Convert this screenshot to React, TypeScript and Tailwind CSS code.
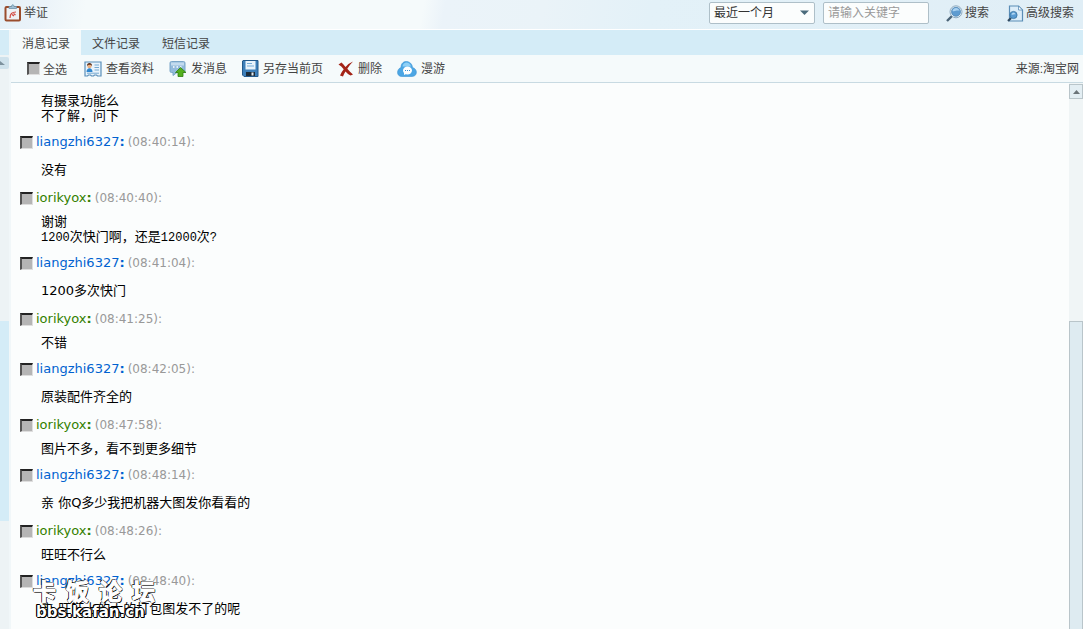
import React from "react";

type Author = "liangzhi6327" | "iorikyox";
type Message = { author: Author; time: string; lines: string[] };

const messages: Message[] = [
  { author: "liangzhi6327", time: "08:40:14", lines: ["没有"] },
  { author: "iorikyox", time: "08:40:40", lines: ["谢谢", "1200次快门啊，还是12000次?"] },
  { author: "liangzhi6327", time: "08:41:04", lines: ["1200多次快门"] },
  { author: "iorikyox", time: "08:41:25", lines: ["不错"] },
  { author: "liangzhi6327", time: "08:42:05", lines: ["原装配件齐全的"] },
  { author: "iorikyox", time: "08:47:58", lines: ["图片不多，看不到更多细节"] },
  { author: "liangzhi6327", time: "08:48:14", lines: ["亲 你Q多少我把机器大图发你看看的"] },
  { author: "iorikyox", time: "08:48:26", lines: ["旺旺不行么"] },
  { author: "liangzhi6327", time: "08:48:40", lines: ["亲 旺旺上的大的打包图发不了的呢"] },
];

const tickBox =
  "size-[13px] shrink-0 appearance-none border-t-2 border-l-2 border-r border-b border-t-[#222] border-l-[#555] border-r-[#dedede] border-b-[#dedede] bg-[#b5b5b5] checked:bg-[#555]";

function ClipboardIcon() {
  return (
    <svg width="18" height="18" viewBox="0 0 18 18" aria-hidden="true">
      <rect x="1.500" y="3" width="14.500" height="13.500" rx="1" fill="#eef1f4" stroke="#9a4d2c" strokeWidth="2" />
      <path d="M5 4.500V2.500h2.500C7.500.2 10 .2 10 2.500h2.500v2z" fill="#9fc0d6" stroke="#6f93aa" strokeWidth=".8" />
      <path d="M6 14c0-4 2-6 6-6M8 10.500l2 1.500M9.500 9.500l2 1.500" fill="none" stroke="#d2443c" strokeWidth="1.200" />
    </svg>
  );
}

function ProfileIcon() {
  return (
    <svg width="18" height="16" viewBox="0 0 18 16" aria-hidden="true">
      <path d="M1 1h16v14h-3.500l-1-1h-2l-1 1h-2l-1-1h-2l-1 1H1z" fill="#e9f4fc" stroke="#5a8fba" strokeWidth="1.200" />
      <circle cx="5.500" cy="5" r="2.200" fill="#e9b083" />
      <path d="M3 5c-.5-4 5.500-4 5 0-1-1.500-3.500-2-5 0z" fill="#5b2d17" />
      <path d="M2.500 11c0-5 6-5 6 0z" fill="#2e86cf" />
      <path d="M10.500 4h4.500M10.500 6.500h4.500M10.500 9h4.500M3 12.200h12" stroke="#76a9d0" />
    </svg>
  );
}

function SendIcon() {
  return (
    <svg width="18" height="17" viewBox="0 0 18 17" aria-hidden="true">
      <path d="M2.500 1.500h12q1.500 0 1.500 1.500v8q0 1.500-1.500 1.500H8L4 15.500v-3H2.500Q1 12.500 1 11V3q0-1.500 1.500-1.500z" fill="#93bbdc" stroke="#7aa6c8" />
      <path d="M2 2.500h13v3H2z" fill="#c3dbee" />
      <path d="M4 7h1.500M7.500 7H9M11 7h1.500" stroke="#fff" strokeWidth="1.500" />
      <path d="M11.500 7.500l5.500 5h-3v4H9v-4H6.500z" fill="#54b01e" stroke="#2f7d12" strokeWidth=".8" />
    </svg>
  );
}

function SaveIcon() {
  return (
    <svg width="17" height="17" viewBox="0 0 17 17" aria-hidden="true">
      <path d="M1 .5h15v16H2L.5 15V1z" fill="#3d7fb9" stroke="#245a8c" />
      <rect x="3.500" y="1" width="10" height="8.500" fill="#e9f3fb" />
      <path d="M5 3.500h5M5 6h7" stroke="#79add7" />
      <rect x="4" y="12" width="9" height="4" fill="#1c2b38" />
      <rect x="9.500" y="12.500" width="2" height="3" fill="#e5edf3" />
    </svg>
  );
}

function DeleteIcon() {
  return (
    <svg width="16" height="16" viewBox="0 0 16 16" aria-hidden="true">
      <path d="M.5 3.500L3.500 1.500Q5 2.500 7.500 6 11 2 15 .5 12 3.500 9.300 7.800 12 11 15 13.500L12.500 14.500Q9.500 13 7.500 10.500 5.500 13.500 5 15.500L2 14.500Q3 11.500 5.700 8.200 3.500 5 .5 3.500z" fill="#a32317" />
    </svg>
  );
}

function CloudIcon() {
  return (
    <svg width="20" height="17" viewBox="0 0 20 17" aria-hidden="true">
      <path d="M5 16.500C-1 16.500-.5 9 4 7.500 4-1 15 .0 15.500 7.500 21 9 20.500 16.500 15 16.500z" fill="#4ca6e4" stroke="#3c93d4" strokeWidth=".6" />
      <path d="M5.500 6.500C6 1 13 1 14 6.500z" fill="#8fd0f6" />
      <ellipse cx="10.500" cy="10.500" rx="4.500" ry="4" fill="#fff" />
      <path d="M7 12v3l3-1.500z" fill="#fff" />
      <path d="M8 10.500h1M10 10.500h1M12 10.500h1" stroke="#3c93d4" strokeWidth="1.200" />
    </svg>
  );
}

function SearchIcon() {
  return (
    <svg width="17" height="17" viewBox="0 0 17 17" aria-hidden="true">
      <path d="M1 16l5-5" stroke="#4c6477" strokeWidth="2.400" />
      <circle cx="10" cy="6.800" r="6" fill="#e3eef6" stroke="#8fabc0" />
      <circle cx="10" cy="6.800" r="4.500" fill="#5d9bd0" stroke="#4a82b0" strokeWidth=".7" />
      <path d="M6.500 6C7 2 13 2 13.500 6 11 4.500 9 7 6.500 6z" fill="#a9d1f0" />
    </svg>
  );
}

function AdvancedSearchIcon() {
  return (
    <svg width="17" height="17" viewBox="0 0 17 17" aria-hidden="true">
      <path d="M2.500 1h9l4 4v11h-13z" fill="#dcedf9" stroke="#5a8db6" strokeWidth="1.200" />
      <path d="M11.500 1v4h4z" fill="#fff" stroke="#5a8db6" strokeWidth=".8" />
      <path d="M1 16l3-3" stroke="#324a60" strokeWidth="2.200" />
      <circle cx="6.500" cy="10" r="3.600" fill="#5a9bd2" stroke="#35719f" strokeWidth=".8" />
      <path d="M4.500 9.500c.5-2.500 3.500-2.500 4 0-1.500-.8-2.500.8-4 0z" fill="#b4d8f3" />
    </svg>
  );
}

function ToolButton({ icon, label }: { icon: React.ReactNode; label: string }) {
  return (
    <button type="button" className="flex items-center gap-1 text-[#444]">
      {icon}
      <span>{label}</span>
    </button>
  );
}

function Line({ text, narrow }: { text: string; narrow: boolean }) {
  return (
    <p>
      {text.split(/([0-9?]+)/).map((part, i) =>
        narrow && /^[0-9?]+$/.test(part) ? (
          <span key={i} className="font-['Liberation_Mono',monospace] text-[12px] leading-none">{part}</span>
        ) : (
          part
        ),
      )}
    </p>
  );
}

function MessageItem({ message }: { message: Message }) {
  const own = message.author === "iorikyox";
  return (
    <li>
      <label className="flex h-[18px] items-center gap-[3px] whitespace-nowrap">
        <input type="checkbox" className={tickBox} />
        <span className={own ? "text-[#338000]" : "text-[#0062d0]"}>
          {message.author}
          <b>:</b>
        </span>
        <time className="text-[12px] text-[#999]">({message.time}):</time>
      </label>
      <div className={own ? "pt-[7px] pb-[10px] pl-[21px] leading-[15px]" : "py-[9px] pl-[21px] leading-5"}>
        {message.lines.map((line) => (
          <Line key={line} text={line} narrow={own} />
        ))}
      </div>
    </li>
  );
}

export default function App() {
  return (
    <div className="flex h-screen flex-col overflow-hidden bg-[#fbfdfd] font-['Liberation_Sans','Noto_Sans_CJK_SC',sans-serif] text-[12px] leading-4 text-[#444]">
      <header className="flex h-[30px] shrink-0 items-center border-b border-white bg-[linear-gradient(100deg,#e4f0f7_0%,#ebf3f9_4%,#f5fafb_8%,#f5fafb_39%,#ebf3f9_41%,#eaf3f8_50%,#e3f1f8_60%,#e0eef6_100%)] pr-[9px] pb-[3px] pl-1">
        <h1 className="flex flex-1 items-center gap-[2px]">
          <ClipboardIcon />
          举证
        </h1>
        <div className="relative mr-2 w-[106px]">
          <select aria-label="时间范围" className="block h-[22px] w-full appearance-none rounded-xs border border-[#aebfc8] bg-[#fbfdfd] pl-1 text-[#333]">
            <option>最近一个月</option>
          </select>
          <svg className="pointer-events-none absolute top-2 right-1.5" width="9" height="6" viewBox="0 0 9 6" aria-hidden="true">
            <path d="M0 .5h9L4.500 5z" fill="#4a6b7c" />
          </svg>
        </div>
        <input aria-label="关键字" placeholder="请输入关键字" className="h-[22px] w-[106px] rounded-xs border border-[#aebfc8] bg-[#fbfdfd] px-1 placeholder:text-[#999]" />
        <div className="ml-[17px] flex gap-[18px]">
          <button type="button" className="flex items-center gap-[2px]"><SearchIcon />搜索</button>
          <button type="button" className="flex items-center gap-[2px]"><AdvancedSearchIcon />高级搜索</button>
        </div>
      </header>

      <div className="flex min-h-0 flex-1">
        <aside className="flex w-[11px] shrink-0 flex-col border-r-2 border-[#f1f7f9] bg-[#edf3f5]">
          <div className="h-[25px] shrink-0 bg-[#d4ecf7]" />
          <button type="button" aria-label="收起" className="mt-[2px] flex h-3 shrink-0 items-center rounded-r-xs bg-[#cfe2ec]">
            <svg width="5" height="4" viewBox="0 0 5 4" aria-hidden="true"><path d="M0 0l5 4H0z" fill="#7d929e" /></svg>
          </button>
          <div className="mt-[252px] h-[200px] shrink-0 bg-[#d4ecf7]" />
        </aside>

        <main className="flex min-w-0 flex-1 flex-col">
          <nav className="flex h-[25px] shrink-0 bg-[#d4ecf7]">
            <a href="#messages" className="bg-[#f5fafb] px-[11px] pt-[6px]">消息记录</a>
            <a href="#files" className="px-[11px] pt-[6px]">文件记录</a>
            <a href="#sms" className="px-[11px] pt-[6px]">短信记录</a>
          </nav>
          <div className="flex h-7 shrink-0 items-center border-b border-[#c8dae2] bg-[#f5fafb] pr-1 pl-4">
            <label className="flex items-center gap-[3px]">
              <input type="checkbox" className={tickBox} />
              <span className="pt-[2px]">全选</span>
            </label>
            <div className="ml-[17px] flex flex-1 gap-[15px]">
              <ToolButton icon={<ProfileIcon />} label="查看资料" />
              <ToolButton icon={<SendIcon />} label="发消息" />
              <ToolButton icon={<SaveIcon />} label="另存当前页" />
              <ToolButton icon={<DeleteIcon />} label="删除" />
              <ToolButton icon={<CloudIcon />} label="漫游" />
            </div>
            <span>来源:淘宝网</span>
          </div>

          <div className="flex min-h-0 flex-1">
            <section id="messages" className="relative min-w-0 flex-1 overflow-hidden pt-[3px] pl-[9px] font-['DejaVu_Sans','Noto_Sans_CJK_SC',sans-serif] text-[13px] text-black">
              <div className="pt-[7px] pb-[10px] pl-[21px] leading-[15px]">
                <p>有摄录功能么</p>
                <p>不了解，问下</p>
              </div>
              <ul>
                {messages.map((m) => (
                  <MessageItem key={m.time} message={m} />
                ))}
              </ul>
              <div className="absolute bottom-[9px] left-[22px] font-bold text-white [text-shadow:1px_0_0_#000,-1px_0_0_#000,0_1px_0_#000,0_-1px_0_#000,1px_1px_0_#000,-1px_-1px_0_#000]">
                <p className="flex gap-[10px] text-[23px] leading-6 [-webkit-text-stroke:1px_#fff]">
                  <span>卡</span><span>饭</span><span>论</span><span>坛</span>
                </p>
                <p className="pl-[3px] text-[15px] leading-4">bbs.kafan.cn</p>
              </div>
            </section>
            <div className="flex w-[14px] shrink-0 flex-col bg-[#f0f5f6]">
              <button type="button" aria-label="向上滚动" className="mt-px flex h-[15px] shrink-0 items-center justify-center border border-[#b9c5ca] bg-[#e3eef3]">
                <svg width="7" height="4" viewBox="0 0 7 4" aria-hidden="true"><path d="M0 4L3.500 0 7 4z" fill="#6b7478" /></svg>
              </button>
              <div className="mt-[222px] flex-1 border border-b-0 border-[#b9c5ca] bg-[#deebf1]" />
            </div>
          </div>
        </main>
      </div>
    </div>
  );
}
